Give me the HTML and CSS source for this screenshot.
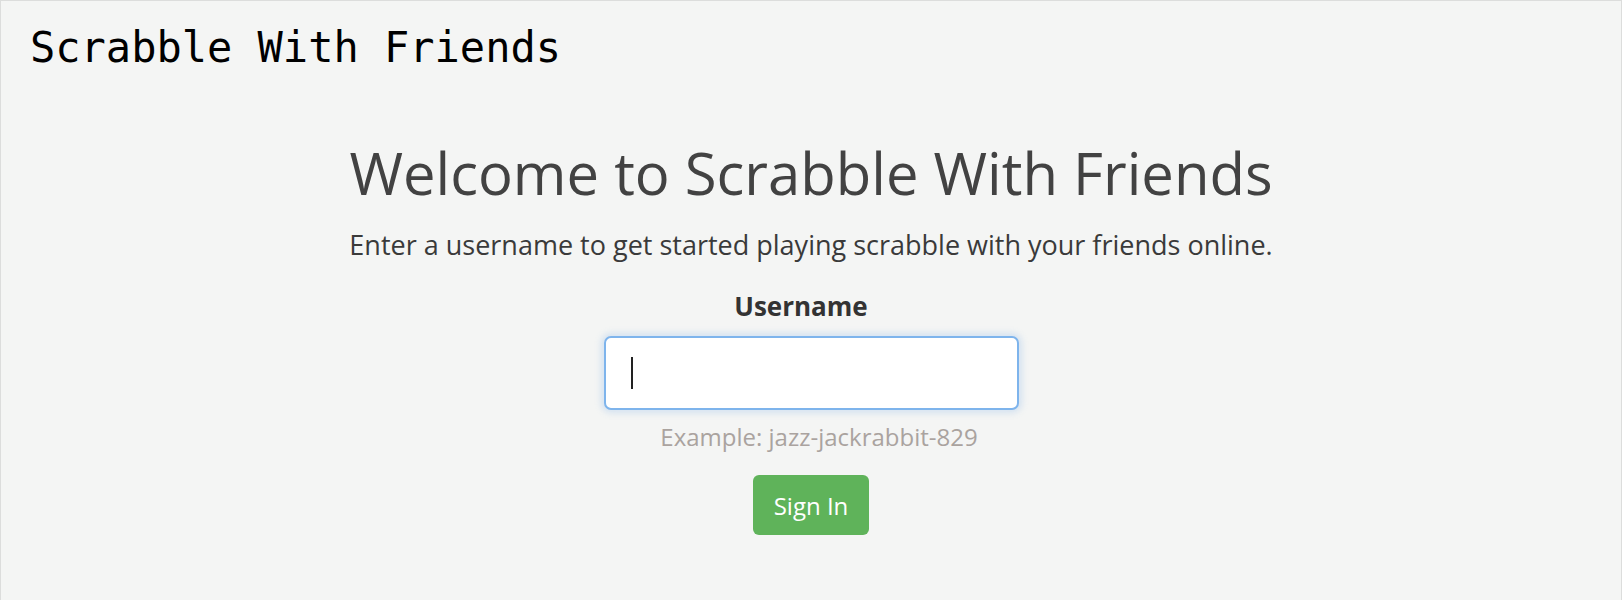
FILE: index.html
```html
<!DOCTYPE html>
<html lang="en">
<head>
<meta charset="utf-8">
<title>Scrabble With Friends</title>
<link rel="stylesheet" href="styles.css">
</head>
<body>
<div class="frame">
  <header class="topbar">
    <div class="brand">Scrabble With Friends</div>
  </header>
  <main class="welcome">
    <h1 class="welcome-title">Welcome to Scrabble With Friends</h1>
    <p class="welcome-lead">Enter a username to get started playing scrabble with your friends online.</p>
    <form class="signin">
      <label class="signin-label" for="username">Username</label>
      <div class="signin-input"><span class="caret"></span></div>
      <div class="signin-help">Example: jazz-jackrabbit-829</div>
      <button type="button" class="signin-btn">Sign In</button>
    </form>
  </main>
</div>
</body>
</html>
```

FILE: styles.css
```css
html, body {
  margin: 0;
  padding: 0;
  background: #f4f5f4;
}

.frame {
  box-sizing: border-box;
  min-height: 640px;
  border: 1px solid #dcdddc;
  background: #f4f5f4;
  font-family: "Open Sans", "Noto Sans", sans-serif;
}

.topbar {
  padding: 22px 0 0 29px;
}

.brand {
  font-family: "DejaVu Sans Mono", monospace;
  font-size: 42px;
  line-height: 49px;
  color: #000;
}

.welcome {
  display: flex;
  flex-direction: column;
  align-items: center;
  margin-top: 69px;
}

.welcome-title {
  margin: 0;
  font-size: 58px;
  font-weight: 400;
  line-height: 64px;
  color: #424242;
}

.welcome-lead {
  margin: 24px 0 0;
  font-size: 27px;
  line-height: 32px;
  color: #3a3a3a;
}

.signin {
  display: flex;
  flex-direction: column;
  align-items: center;
}

.signin-label {
  margin-top: 29px;
  padding-right: 20px;
  font-size: 26px;
  font-weight: 700;
  line-height: 32px;
  color: #333333;
}

.signin-input {
  box-sizing: border-box;
  margin-top: 14px;
  width: 415px;
  height: 74px;
  background: #ffffff;
  border: 2px solid #7eb4ec;
  border-radius: 7px;
  box-shadow: 0 0 6px 3px rgba(120, 170, 230, 0.25);
  display: flex;
  align-items: center;
  padding-left: 25px;
}

.caret {
  display: block;
  width: 2px;
  height: 32px;
  background: #222;
}

.signin-help {
  margin-top: 12px;
  padding-left: 16px;
  font-size: 24px;
  line-height: 30px;
  color: #aaa39f;
}

.signin-btn {
  margin-top: 23px;
  width: 116px;
  height: 60px;
  border: 0;
  border-radius: 6px;
  background: #5fb35a;
  color: #ffffff;
  font-family: "Open Sans", "Noto Sans", sans-serif;
  font-size: 24px;
  padding: 0;
}
```
